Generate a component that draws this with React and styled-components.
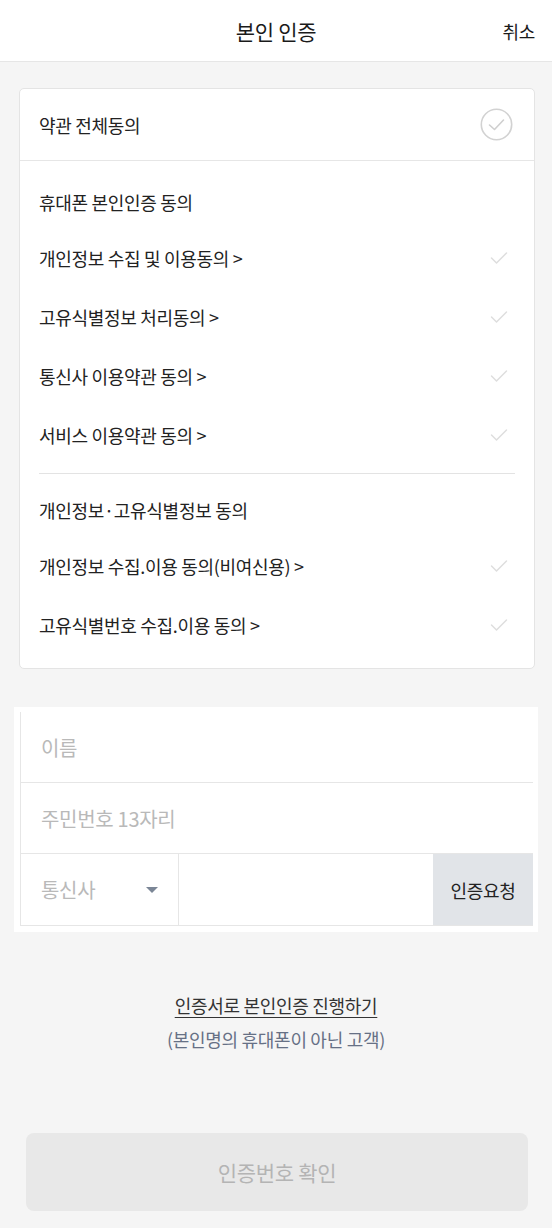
import React from "react"
import styled, { createGlobalStyle } from "styled-components"

const GlobalStyle = createGlobalStyle`
  body {
    margin: 0;
    background: #f5f5f5;
    font-family: "Noto Sans CJK KR", "Noto Sans", sans-serif;
    color: #222;
  }
`

const terms = [
  {
    title: "휴대폰 본인인증 동의",
    items: [
      "개인정보 수집 및 이용동의 >",
      "고유식별정보 처리동의 >",
      "통신사 이용약관 동의 >",
      "서비스 이용약관 동의 >",
    ],
  },
  {
    title: "개인정보·고유식별정보 동의",
    items: ["개인정보 수집.이용 동의(비여신용) >", "고유식별번호 수집.이용 동의 >"],
  },
]

const CircleCheck = () => (
  <svg width="33" height="33" viewBox="0 0 33 33">
    <circle cx="16.5" cy="16.5" r="15.2" fill="none" stroke="#d2d2d2" strokeWidth="1.6" />
    <polyline points="9.5,17 14.5,21.5 23.5,12" fill="none" stroke="#cfcfcf" strokeWidth="1.6" strokeLinecap="round" strokeLinejoin="round" />
  </svg>
)

const SmallCheck = () => (
  <svg width="18" height="14" viewBox="0 0 18 14">
    <polyline points="1.5,7 6.5,12 16.5,2" fill="none" stroke="#dedede" strokeWidth="1.5" strokeLinecap="round" strokeLinejoin="round" />
  </svg>
)

const App = () => (
  <>
    <GlobalStyle />
    <Page>
      <Header>
        <HeaderTitle>본인 인증</HeaderTitle>
        <CancelButton>취소</CancelButton>
      </Header>

      <TermsCard>
        <AllAgreeRow>
          <span>약관 전체동의</span>
          <CircleCheck />
        </AllAgreeRow>
        {terms.map((group, i) => (
          <React.Fragment key={group.title}>
            {i > 0 && <Divider />}
            <TermsGroup $last={i === terms.length - 1}>
              <GroupTitle>{group.title}</GroupTitle>
              {group.items.map(item => (
                <TermRow key={item}>
                  <span>{item}</span>
                  <SmallCheck />
                </TermRow>
              ))}
            </TermsGroup>
          </React.Fragment>
        ))}
      </TermsCard>

      <FormWrap>
        <FormBox>
          <FieldRow>
            <Placeholder>이름</Placeholder>
          </FieldRow>
          <FieldRow>
            <Placeholder>주민번호 13자리</Placeholder>
          </FieldRow>
          <PhoneRow>
            <CarrierSelect>
              <Placeholder>통신사</Placeholder>
              <Caret />
            </CarrierSelect>
            <PhoneInput />
            <RequestButton>인증요청</RequestButton>
          </PhoneRow>
        </FormBox>
      </FormWrap>

      <CertLinks>
        <CertLink>인증서로 본인인증 진행하기</CertLink>
        <CertNote>(본인명의 휴대폰이 아닌 고객)</CertNote>
      </CertLinks>

      <ConfirmButton>인증번호 확인</ConfirmButton>
    </Page>
  </>
)

export default App

const Page = styled.div`
  display: flex;
  flex-direction: column;
  min-height: 1228px;
  background: #f5f5f5;
  letter-spacing: -0.3px;
`

const Header = styled.header`
  position: relative;
  height: 61px;
  display: flex;
  align-items: center;
  justify-content: center;
  background: #fff;
  border-bottom: 1px solid #e6e6e6;
`

const HeaderTitle = styled.h1`
  margin: 0;
  font-size: 21px;
  font-weight: 400;
  color: #1a1a1a;
`

const CancelButton = styled.span`
  position: absolute;
  right: 17px;
  top: 50%;
  transform: translateY(-50%);
  font-size: 18px;
  color: #1a1a1a;
`

const TermsCard = styled.section`
  margin: 26px 17px 0 19px;
  background: #fff;
  border: 1px solid #e4e4e4;
  border-radius: 5px;
`

const AllAgreeRow = styled.div`
  height: 71px;
  display: flex;
  align-items: center;
  justify-content: space-between;
  padding: 0 21px 0 19px;
  border-bottom: 1px solid #e6e6e6;
  font-size: 18px;
`

const TermsGroup = styled.div`
  display: flex;
  flex-direction: column;
  padding: ${p => (p.$last ? "10px 0 14px" : "15px 0 0")};
`

const GroupTitle = styled.div`
  height: 52px;
  display: flex;
  align-items: center;
  padding: 0 19px;
  font-size: 18px;
`

const TermRow = styled.div`
  height: 59px;
  display: flex;
  align-items: center;
  justify-content: space-between;
  padding: 0 26px 0 19px;
  font-size: 18px;
`

const Divider = styled.hr`
  margin: 9px 19px 0;
  border: 0;
  border-top: 1px solid #e3e3e3;
`

const FormWrap = styled.div`
  margin: 38px 14px 0 14px;
  padding: 5px 5px 6px 6px;
  background: #fff;
`

const FormBox = styled.div`
  border-left: 1px solid #e6e6e6;
`

const FieldRow = styled.div`
  height: 70px;
  display: flex;
  align-items: center;
  padding-left: 20px;
  border-bottom: 1px solid #e6e6e6;
`

const Placeholder = styled.span`
  font-size: 20px;
  color: #b9b9b9;
`

const PhoneRow = styled.div`
  height: 71px;
  display: flex;
  border-bottom: 1px solid #e6e6e6;
`

const CarrierSelect = styled.div`
  width: 158px;
  display: flex;
  align-items: center;
  justify-content: space-between;
  padding: 0 20px 0 20px;
  box-sizing: border-box;
  border-right: 1px solid #e6e6e6;
`

const Caret = styled.span`
  width: 0;
  height: 0;
  border-left: 6px solid transparent;
  border-right: 6px solid transparent;
  border-top: 6px solid #7b8696;
`

const PhoneInput = styled.div`
  flex: 1;
`

const RequestButton = styled.div`
  width: 100px;
  display: flex;
  align-items: center;
  justify-content: center;
  background: #e1e4e8;
  font-size: 18px;
  color: #222;
`

const CertLinks = styled.div`
  display: flex;
  flex-direction: column;
  align-items: center;
  gap: 8px;
  margin-top: 60px;
  font-size: 18px;
`

const CertLink = styled.span`
  color: #333;
  text-decoration: underline;
  text-underline-offset: 4px;
`

const CertNote = styled.span`
  color: #667085;
`

const ConfirmButton = styled.div`
  margin: auto 24px 17px 26px;
  height: 78px;
  display: flex;
  align-items: center;
  justify-content: center;
  background: #e8e8e8;
  border-radius: 8px;
  font-size: 21px;
  color: #b4b4b4;
`
